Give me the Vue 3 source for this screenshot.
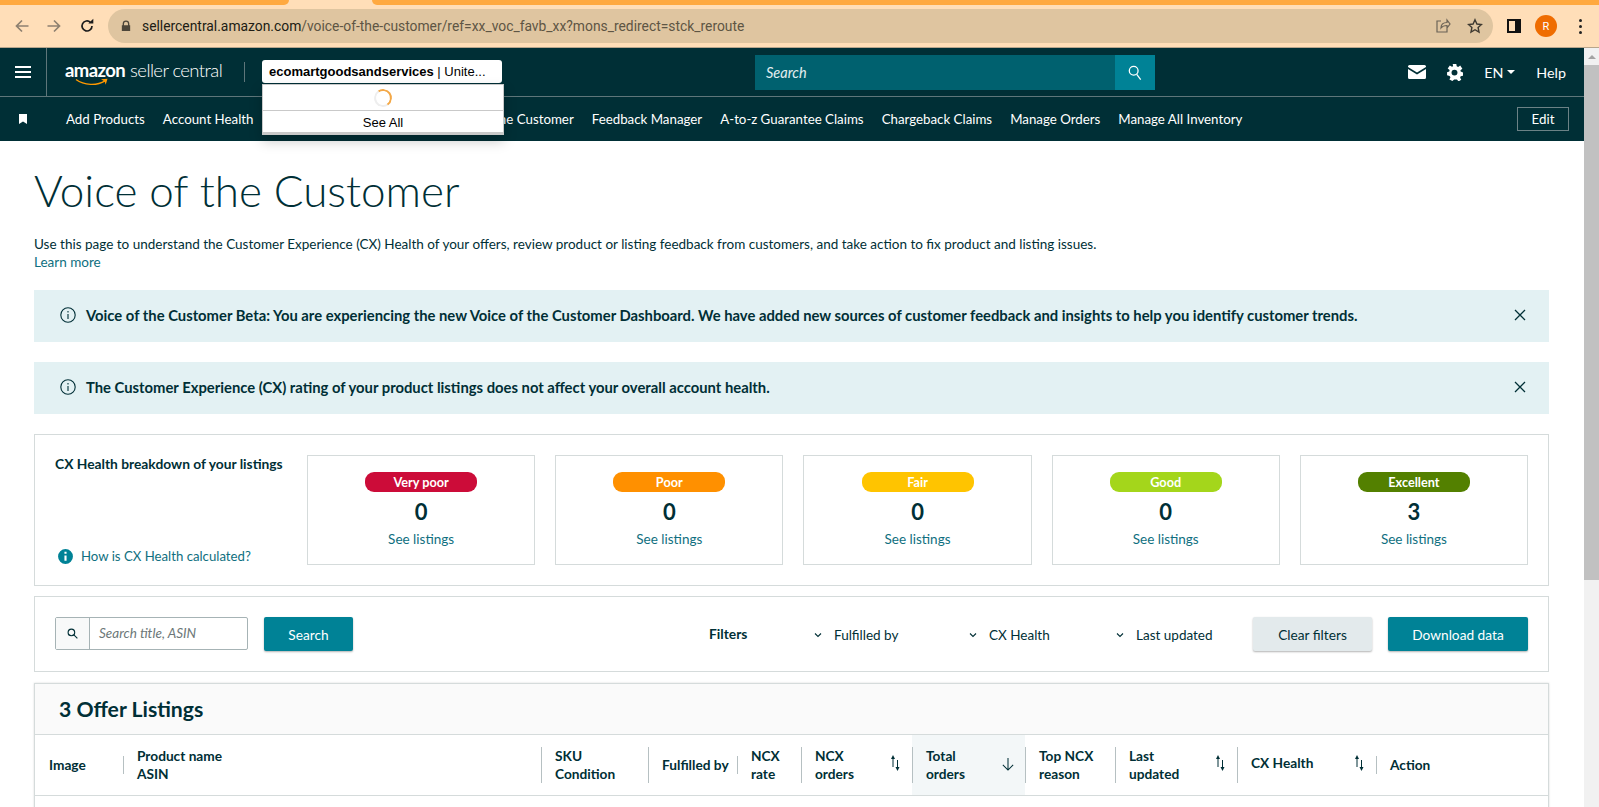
<script setup>
const nav = ['Add Products', 'Account Health']
const navRight = ['Feedback Manager', 'A-to-z Guarantee Claims', 'Chargeback Claims', 'Manage Orders', 'Manage All Inventory']
const boxes = [
  { label: 'Very poor', color: '#CC0C39', n: 0 },
  { label: 'Poor', color: '#FF9000', n: 0 },
  { label: 'Fair', color: '#FFC400', n: 0 },
  { label: 'Good', color: '#A4D61B', n: 0 },
  { label: 'Excellent', color: '#538000', n: 3 },
]
const filters = [
  { label: 'Fulfilled by', w: 155 },
  { label: 'CX Health', w: 147 },
  { label: 'Last updated', w: 108 },
]
const cols = [
  { lines: ['Image'], w: 88, sep: 'none' },
  { lines: ['Product name', 'ASIN'], w: 418, sep: 'short' },
  { lines: ['SKU', 'Condition'], w: 107, sep: 'tall' },
  { lines: ['Fulfilled by'], w: 89, sep: 'tall' },
  { lines: ['NCX', 'rate'], w: 64, sep: 'short' },
  { lines: ['NCX', 'orders'], w: 111, sep: 'tall', sort: 1 },
  { lines: ['Total', 'orders'], w: 113, sep: 'tall', active: 1 },
  { lines: ['Top NCX', 'reason'], w: 90, sep: 'tall' },
  { lines: ['Last', 'updated'], w: 122, sep: 'tall', sort: 1 },
  { lines: ['CX Health'], w: 139, sep: 'tall', sort: 1, raised: 1 },
  { lines: ['Action'], w: 172, sep: 'short' },
]
</script>

<template>
  <div class="screen">
    <div class="tabstrip"><i class="tab-left"></i><i class="tab-gap"></i><i class="tab-right"></i></div>
    <div class="toolbar">
      <svg class="tb-ico back" viewBox="0 0 16 16"><path d="M14.5 8H2.5M8 2.5 2.5 8 8 13.5" /></svg>
      <svg class="tb-ico fwd" viewBox="0 0 16 16"><path d="M1.5 8h12M8 2.5 13.5 8 8 13.5" /></svg>
      <svg class="tb-ico reload" viewBox="0 0 16 16"><path d="M13 8a5 5 0 1 1-1.6-3.7" /><path class="fill" d="M9.3 5.6h5V.8z" /></svg>
      <div class="omni">
        <svg class="lock" viewBox="0 0 12 14"><path d="M2 6V4.3a4 4 0 0 1 8 0V6h1v7H1V6zm1.6 0h4.8V4.3a2.4 2.4 0 0 0-4.8 0z" /></svg>
        <span class="url"><b>sellercentral.amazon.com</b>/voice-of-the-customer/ref=xx_voc_favb_xx?mons_redirect=stck_reroute</span>
        <svg class="omni-ico" viewBox="0 0 16 16"><path d="M6 3H2v11h10v-4M6 10c0-3.5 2.5-5.500 6-5.500V2l3 4-3 4V7.500C9.500 7.500 7.500 8 6 10z" /></svg>
        <svg class="omni-ico star" viewBox="0 0 16 16"><path d="m8 1.800 1.900 4.200 4.600.5-3.400 3 .9 4.500L8 11.700 4 14l.9-4.500-3.400-3 4.600-.5z" /></svg>
      </div>
      <span class="sidepanel"></span>
      <span class="avatar">R</span>
      <span class="kebab"><i></i><i></i><i></i></span>
    </div>

    <div class="body">
      <div class="page">
        <header class="topbar">
          <div class="burger-cell"><span class="burger"><i></i><i></i><i></i></span></div>
          <div class="logo">
            <span class="logo-a">amazon</span><span class="logo-b">seller central</span>
            <svg class="smile" viewBox="0 0 34 9"><path d="M1 1.500C9 7.500 22 8 30 2.800" /><path class="head" d="m26 1.200 6.500-.4-1.800 6-1-3.300z" /></svg>
          </div>
          <span class="logo-div"></span>
          <div class="account">
            <div class="acct-btn"><b>ecomartgoodsandservices</b> | Unite...</div>
            <div class="acct-panel">
              <div class="acct-spin"><span class="spinner"></span></div>
              <div class="acct-all">See All</div>
            </div>
          </div>
          <div class="top-search">
            <span class="ts-input">Search</span>
            <span class="ts-btn"><svg viewBox="0 0 16 18"><circle cx="6.500" cy="6.500" r="5" /><path d="m10 10.500 4.500 6" /></svg></span>
          </div>
          <div class="top-right">
            <svg class="mail" viewBox="0 0 18 14"><path d="M1.500 0h15A1.500 1.500 0 0 1 18 1.500V2L9 7.500 0 2v-.5A1.500 1.500 0 0 1 1.500 0zM0 4l9 5.500L18 4v8.500a1.500 1.500 0 0 1-1.500 1.500h-15A1.500 1.500 0 0 1 0 12.500z" /></svg>
            <svg class="gear" viewBox="0 0 16 16"><path fill-rule="evenodd" d="M6.300 0h3.400l.4 2.200 1.300.6L13.400 1.500l2 2.900-1.800 1.400.2 1.300 2.200.9v3l-2.200.6-.5 1.300 1.100 2-2.600 1.500-1.500-1.700H7.700L6 16l-2.800-1.500 1-2-.8-1.200L1 10.700v-3L3.100 7l.3-1.300-1.800-1.500 2-2.800 2 1.200 1.100-.6zM8 5.300a2.800 2.800 0 1 0 0 5.600 2.800 2.800 0 0 0 0-5.600z" /></svg>
            <span class="lang">EN<i class="caret"></i></span>
            <span class="help">Help</span>
          </div>
        </header>
        <nav class="navbar">
          <svg class="bookmark" viewBox="0 0 8 10"><path d="M0 0h8v10L4 7.500 0 10z" /></svg>
          <a v-for="n in nav" :key="n">{{ n }}</a>
          <a class="under">Voice of the Customer</a>
          <a v-for="n in navRight" :key="n">{{ n }}</a>
          <span class="edit">Edit</span>
        </nav>

        <main class="content">
          <h1>Voice of the Customer</h1>
          <p class="desc">Use this page to understand the Customer Experience (CX) Health of your offers, review product or listing feedback from customers, and take action to fix product and listing issues.<br /><a>Learn more</a></p>

          <div class="alert">
            <svg class="i-line" viewBox="0 0 16 16"><circle cx="8" cy="8" r="7.200" /><path d="M8 7v5M8 4v1.500" /></svg>
            <span>Voice of the Customer Beta: You are experiencing the new Voice of the Customer Dashboard. We have added new sources of customer feedback and insights to help you identify customer trends.</span>
            <svg class="x" viewBox="0 0 12 12"><path d="m1 1 10 10M11 1 1 11" /></svg>
          </div>
          <div class="alert">
            <svg class="i-line" viewBox="0 0 16 16"><circle cx="8" cy="8" r="7.200" /><path d="M8 7v5M8 4v1.500" /></svg>
            <span>The Customer Experience (CX) rating of your product listings does not affect your overall account health.</span>
            <svg class="x" viewBox="0 0 12 12"><path d="m1 1 10 10M11 1 1 11" /></svg>
          </div>

          <section class="card health">
            <div class="health-side">
              <strong>CX Health breakdown of your listings</strong>
              <a class="how"><svg viewBox="0 0 16 16"><circle cx="8" cy="8" r="8" /><path d="M8 7v5M8 3.500v2" /></svg>How is CX Health calculated?</a>
            </div>
            <div class="boxes">
              <div v-for="b in boxes" :key="b.label" class="box">
                <span class="pill" :style="{ background: b.color }">{{ b.label }}</span>
                <span class="num">{{ b.n }}</span>
                <a>See listings</a>
              </div>
            </div>
          </section>

          <section class="card toolsrow">
            <div class="sbox">
              <span class="sbox-ico"><svg viewBox="0 0 12 12"><circle cx="4.800" cy="4.800" r="3.600" /><path d="m7.500 7.500 3.800 3.800" /></svg></span>
              <span class="sbox-in">Search title, ASIN</span>
            </div>
            <span class="btn primary sbtn">Search</span>
            <strong class="flabel">Filters</strong>
            <span v-for="f in filters" :key="f.label" class="filter" :style="{ width: f.w + 'px' }">
              <svg viewBox="0 0 8 6"><path d="m1 1.500 3 3 3-3" /></svg>{{ f.label }}
            </span>
            <span class="btn clear">Clear filters</span>
            <span class="btn primary dl">Download data</span>
          </section>

          <section class="card listing">
            <div class="listing-title">3 Offer Listings</div>
            <div class="thead">
              <div v-for="c in cols" :key="c.lines[0] + c.w" class="th" :class="['sep-' + c.sep, { active: c.active, raised: c.raised }]" :style="{ width: c.w + 'px' }">
                <div class="th-text"><div v-for="l in c.lines" :key="l">{{ l }}</div></div>
                <svg v-if="c.sort" class="sort" viewBox="0 0 10 16"><path d="M3 12V2" /><path class="fill" d="M3 0 1 4h4z" /><path d="M7.500 5v9" /><path class="fill" d="m7.500 16-2-4h4z" /></svg>
                <svg v-if="c.active" class="down" viewBox="0 0 14 16"><path d="M7 1v14M1 9l6 6 6-6" /></svg>
              </div>
            </div>
          </section>
        </main>
      </div>
      <aside class="scrollbar">
        <i class="sb-up"></i>
        <i class="sb-thumb"></i>
      </aside>
    </div>
  </div>
</template>

<style>
html, body { margin: 0; overflow: hidden; background: #fff; }
</style>

<style scoped>
.screen { width: 1599px; height: 807px; overflow: hidden; font-family: Lato, "Liberation Sans", sans-serif; font-size: 13.5px; color: #002F36; background: #fff; display: flex; flex-direction: column; }
a { color: #0F6F80; }

.tabstrip { height: 5px; display: flex; background: #FFDEB8; flex: none; }
.tab-left { width: 289px; background: #FFA940; border-bottom-right-radius: 5px; }
.tab-gap { width: 83px; }
.tab-right { flex: 1; background: #FFA940; border-bottom-left-radius: 5px; }
.toolbar { flex: none; background: #FFDEB8; display: flex; align-items: center; border-bottom: 1px solid #B7A58C; box-sizing: border-box; height: 43px; }
.tb-ico { width: 16px; height: 16px; fill: none; stroke-width: 1.700; flex: none; }
.back { margin-left: 14px; stroke: #8E8070; }
.fwd { margin-left: 16px; stroke: #8E8070; }
.reload { margin-left: 17px; stroke: #1c1c1c; }
.reload .fill { fill: #1c1c1c; stroke: none; }
.omni { margin-left: 13px; width: 1385px; height: 34px; border-radius: 17px; background: #DFC5A0; display: flex; align-items: center; flex: none; }
.lock { width: 10px; height: 12px; margin-left: 13px; fill: #4D4639; flex: none; }
.url { margin-left: 11px; font-family: Roboto, sans-serif; font-size: 13.850px; color: #5E5544; white-space: nowrap; flex: 1; }
.url b { font-weight: 400; color: #201C14; }
.omni-ico { width: 16px; height: 16px; fill: none; stroke: #6B6356; stroke-width: 1.200; flex: none; margin-right: 16px; }
.omni-ico.star { stroke: #3F3A31; stroke-width: 1.400; margin-right: 10px; }
.sidepanel { width: 14px; height: 14px; box-sizing: border-box; border: 2px solid #111; border-right-width: 6px; margin-left: 14px; flex: none; }
.avatar { width: 22px; height: 22px; margin-left: 14px; border-radius: 50%; background: #EF6C00; color: #fff; font: 11px Roboto, sans-serif; display: flex; align-items: center; justify-content: center; flex: none; }
.kebab { margin-left: 22px; display: flex; flex-direction: column; gap: 3px; }
.kebab i { width: 3px; height: 3px; border-radius: 50%; background: #222; }

.body { flex: 1; display: flex; min-height: 0; }
.page { width: 1584px; flex: none; min-width: 0; }
.scrollbar { width: 15px; background: #F1F1F1; display: flex; flex-direction: column; align-items: center; }
.sb-up { margin-top: 7px; border: 4px solid transparent; border-top: 0; border-bottom: 4px solid #A3A3A3; }
.sb-thumb { width: 15px; height: 515px; background: #C1C1C1; margin-top: 6px; }

.topbar { height: 48px; background: #002F36; display: flex; align-items: center; color: #fff; position: relative; }
.burger-cell { width: 47px; height: 48px; border-right: 1px solid #5E767A; display: flex; align-items: center; justify-content: center; box-sizing: border-box; flex: none; }
.burger { display: flex; flex-direction: column; gap: 3px; }
.burger i { width: 16px; height: 2px; background: #fff; }
.logo { position: relative; margin-left: 18px; width: 162px; display: flex; align-items: baseline; height: 28px; white-space: nowrap; flex: none; }
.logo-a { font-weight: 700; font-size: 18.500px; letter-spacing: -.6px; line-height: 24px; }
.logo-b { font-weight: 300; font-size: 18.500px; margin-left: 5px; letter-spacing: -.6px; line-height: 24px; }
.smile { position: absolute; left: 10px; top: 20px; width: 34px; height: 9px; fill: none; stroke: #FF9900; stroke-width: 1.400; }
.smile .head { fill: #FF9900; stroke: none; }
.logo-div { width: 1px; height: 20px; background: #5E767A; margin-left: 17px; flex: none; }
.account { position: relative; margin-left: 17px; margin-bottom: 1px; width: 240px; flex: none; }
.acct-btn { height: 23px; background: #fff; border-radius: 3px; color: #000; font-family: "Liberation Sans", sans-serif; font-size: 13px; line-height: 24px; padding-left: 7px; white-space: nowrap; overflow: hidden; box-sizing: border-box; }
.acct-btn b { font-weight: 700; }
.acct-panel { position: absolute; z-index: 5; top: 24px; left: 0; width: 242px; background: #fff; border: 1px solid #C9C9C9; box-sizing: border-box; box-shadow: 0 6px 12px rgba(0,0,0,.22); color: #000; font-family: "Liberation Sans", sans-serif; }
.acct-spin { height: 25px; display: flex; align-items: center; justify-content: center; }
.spinner { width: 18px; height: 18px; box-sizing: border-box; border-radius: 50%; border: 2px solid #EEEEEE; border-top-color: #F3A847; border-right-color: #F3A847; transform: rotate(10deg); }
.acct-all { height: 21px; border-top: 1px solid #C9C9C9; border-bottom: 2px solid #C9C9C9; text-align: center; font-size: 13px; line-height: 23px; }
.top-search { position: absolute; left: 755px; top: 7px; display: flex; height: 35px; }
.ts-input { width: 360px; background: #00616F; font-style: italic; font-size: 14.500px; line-height: 35px; padding-left: 11px; box-sizing: border-box; color: #E3EEF0; }
.ts-btn { width: 40px; background: #008296; display: flex; align-items: center; justify-content: center; }
.ts-btn svg { width: 14px; height: 16px; fill: none; stroke: #fff; stroke-width: 1.500; }
.top-right { margin-left: auto; display: flex; align-items: center; font-size: 14.300px; }
.mail { width: 18px; height: 14px; fill: #fff; }
.gear { width: 17px; height: 17px; fill: #fff; margin-left: 20px; }
.lang { margin-left: 21px; display: flex; align-items: center; }
.caret { border: 4px solid transparent; border-top: 4px solid #fff; border-bottom: 0; margin-left: 4px; }
.help { margin-left: 21px; margin-right: 18px; }

.navbar { height: 44px; background: #002F36; border-top: 1px solid #5E767A; display: flex; align-items: center; gap: 18px; color: #fff; font-size: 13.300px; padding-left: 19px; white-space: nowrap; }
.navbar a { color: #fff; }
.bookmark { width: 8px; height: 10px; fill: #fff; margin-right: 21px; }
.under { margin-left: 172px; }
.edit { margin-left: auto; margin-right: 15px; width: 52px; height: 24px; box-sizing: border-box; border: 1px solid #6C8286; display: flex; align-items: center; justify-content: center; }

.content { padding: 0 35px 0 34px; }
h1 { margin: 23px 0 0; font-weight: 300; font-size: 44px; line-height: 52px; }
.desc { margin: 19px 0 0; line-height: 18px; height: 36px; white-space: nowrap; }

.alert { margin-top: 20px; height: 52px; background: #E3F1F3; display: flex; align-items: center; font-weight: 700; font-size: 14.800px; padding: 0 23px 2px 26px; box-sizing: border-box; }
.desc + .alert { margin-top: 19px; }
.i-line { width: 16px; height: 16px; fill: none; stroke: #002F36; stroke-width: 1.100; margin-right: 10px; flex: none; }
.alert span { flex: 1; white-space: nowrap; }
.x { width: 12px; height: 12px; fill: none; stroke: #002F36; stroke-width: 1.300; flex: none; }

.card { border: 1px solid #D5DBDB; box-sizing: border-box; background: #fff; }
.health { margin-top: 20px; height: 152px; display: flex; padding: 20px; }
.health-side { width: 252px; flex: none; display: flex; flex-direction: column; justify-content: space-between; }
.health-side strong { font-weight: 700; line-height: 18px; font-size: 13.800px; white-space: nowrap; }
.how { display: flex; align-items: center; line-height: 18px; font-size: 13.200px; }
.how svg { width: 17px; height: 17px; margin: 0 7px 0 2px; fill: #008296; stroke: #fff; stroke-width: 2; }
.boxes { display: flex; gap: 20px; flex: 1; }
.box { flex: 1; border: 1px solid #D5DBDB; display: flex; flex-direction: column; align-items: center; padding-top: 16px; box-sizing: border-box; }
.pill { width: 112px; height: 20px; border-radius: 9px; color: #fff; font-weight: 700; font-size: 12.700px; text-align: center; line-height: 20px; }
.num { font-size: 22px; font-weight: 700; line-height: 30px; margin-top: 5px; }
.box a { line-height: 18px; margin-top: 3px; }

.toolsrow { margin-top: 10px; height: 76px; display: flex; align-items: center; padding: 0 20px; }
.sbox { width: 193px; height: 33px; border: 1px solid #A6B3B5; border-radius: 2px; box-sizing: border-box; display: flex; flex: none; margin-bottom: 1px; }
.sbox-ico { width: 33px; background: #F8F9F9; border-right: 1px solid #A6B3B5; display: flex; align-items: center; justify-content: center; flex: none; }
.sbox-ico svg { width: 11px; height: 11px; fill: none; stroke: #002F36; stroke-width: 1.200; }
.sbox-in { font-style: italic; color: #6C7778; line-height: 31px; padding-left: 9px; }
.btn { display: flex; align-items: center; justify-content: center; height: 34px; box-sizing: border-box; border-radius: 2px; box-shadow: 0 1px 2px rgba(0,0,0,.3); flex: none; font-size: 13.700px; }
.primary { background: #008296; color: #fff; }
.sbtn { width: 89px; margin-left: 16px; margin-right: 356px; }
.flabel { font-weight: 700; width: 105px; margin-bottom: 2px; font-size: 13.800px; flex: none; }
.filter { display: inline-flex; align-items: center; flex: none; margin-top: 1px; }
.filter svg { width: 8px; height: 6px; fill: none; stroke: #002F36; stroke-width: 1.100; margin-right: 12px; flex: none; }
.clear { width: 119px; background: #E3EAEC; margin-left: 29px; }
.dl { width: 140px; margin-left: 16px; }

.listing { margin-top: 11px; height: 200px; box-shadow: 0 0 2px rgba(0,0,0,.15); }
.listing-title { height: 50px; background: #FAFAFA; border-bottom: 1px solid #D5DBDB; font-size: 21.200px; font-weight: 700; line-height: 50px; padding-left: 24px; }
.thead { height: 60px; border-bottom: 1px solid #D5DBDB; display: flex; align-items: stretch; font-size: 13.700px; }
.th { position: relative; box-sizing: border-box; padding-left: 14px; display: flex; align-items: center; font-weight: 700; line-height: 18px; flex: none; white-space: nowrap; }
.th::before { content: ""; position: absolute; left: 0; top: 50%; width: 1px; background: #B6C0C2; transform: translateY(-50%); }
.sep-tall::before { height: 36px; }
.sep-short::before { height: 18px; }
.sep-none::before { display: none; }
.active { background: #F3F7F8; }
.raised .th-text { margin-bottom: 4px; }
.sort { position: absolute; right: 12px; top: 20px; width: 10px; height: 16px; fill: none; stroke: #002F36; stroke-width: 1; }
.sort .fill { fill: #002F36; stroke: none; }
.down { position: absolute; right: 11px; top: 22px; width: 12px; height: 14px; fill: none; stroke: #002F36; stroke-width: 1.200; }
</style>
